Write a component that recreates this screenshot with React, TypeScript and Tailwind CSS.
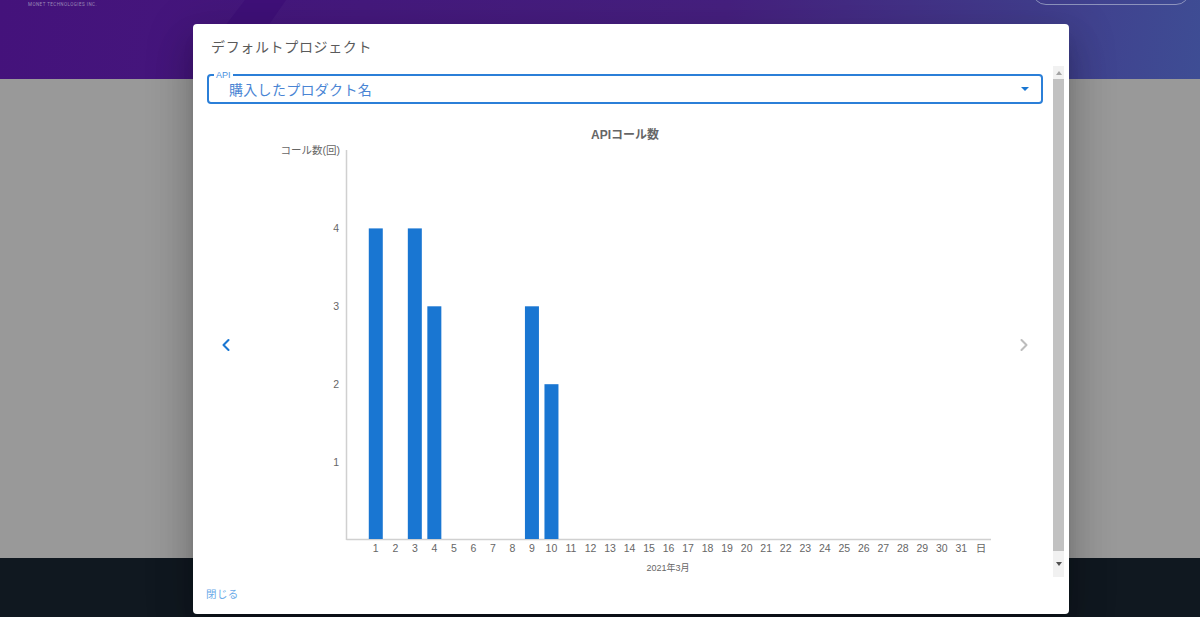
import { ChevronLeft, ChevronRight } from 'lucide-react';

const DAYS = Array.from({ length: 31 }, (_, i) => String(i + 1)).concat('日');
const CALLS: Record<number, number> = { 1: 4, 3: 4, 4: 3, 9: 3, 10: 2 };
const STEP_X = 19.52;
const STEP_Y = 77.9;
const AXIS_X = 346.5;
const BASE_Y = 540;

function UsageChart() {
  return (
    <svg viewBox="245 104 760 473" className="w-[760px] h-[473px] shrink-0">
      <text x="625" y="139" textAnchor="middle" fontSize="12" fontWeight="700" fill="#666">APIコール数</text>
      <text x="340" y="154" textAnchor="end" fontSize="10.5" fill="#666">コール数(回)</text>
      <line x1={AXIS_X} y1="150" x2={AXIS_X} y2={BASE_Y} stroke="#d0d0d0" strokeWidth="1.5" />
      <line x1={AXIS_X} y1={BASE_Y - 0.5} x2="991" y2={BASE_Y - 0.5} stroke="#d0d0d0" strokeWidth="1.5" />
      {[1, 2, 3, 4].map((n) => (
        <text key={n} x="339" y={BASE_Y - n * STEP_Y + 3.5} textAnchor="end" fontSize="10.5" fill="#666">{n}</text>
      ))}
      {DAYS.map((d, i) => {
        const cx = AXIS_X + STEP_X * (i + 1.5);
        const v = CALLS[i + 1];
        return (
          <g key={d}>
            {v && <rect x={cx - 7} y={BASE_Y - v * STEP_Y} width="14" height={v * STEP_Y - 1} fill="#1976d2" />}
            <text x={cx} y="552" textAnchor="middle" fontSize="10.5" fill="#666">{d}</text>
          </g>
        );
      })}
      <text x="668" y="571" textAnchor="middle" fontSize="9" fill="#666">2021年3月</text>
    </svg>
  );
}

function Scrollbar() {
  return (
    <div className="w-[11px] h-full shrink-0 bg-[#f1f1f1] flex flex-col items-center">
      <div className="h-[13px] flex items-center justify-center">
        <div className="w-0 h-0 border-x-[3.5px] border-x-transparent border-b-[4px] border-b-[#a3a3a3]" />
      </div>
      <div className="w-full flex-1 bg-[#c1c1c1]" />
      <div className="h-[26px] flex items-center justify-center">
        <div className="w-0 h-0 border-x-[3.5px] border-x-transparent border-t-[4px] border-t-[#505050]" />
      </div>
    </div>
  );
}

export default function App() {
  return (
    <div className="relative w-[1200px] h-[617px] overflow-hidden flex flex-col font-['Liberation_Sans','Noto_Sans_CJK_JP',sans-serif]">
      {/* page behind the modal */}
      <header className="relative h-[79px] shrink-0 bg-[linear-gradient(100deg,#44127b_0%,#46207f_60%,#3e4d94_100%)]">
        <svg viewBox="0 0 70 26" className="absolute left-[225px] top-0 w-[70px] h-[26px]">
          <polygon points="20,0 61,0 43,26 0,26" fill="#3f1079" />
        </svg>
        <div className="pl-7 pt-[2px] text-[4.5px] leading-[6px] tracking-[0.45px] text-[#9c8bb8] font-['Roboto',sans-serif]">MONET TECHNOLOGIES INC.</div>
        <div className="absolute right-[10px] top-[-31px] w-[158px] h-[36px] rounded-[14px] border border-[#8d93bd]" />
      </header>
      <main className="flex-1 bg-[#999999]" />
      <footer className="h-[59px] shrink-0 bg-[#101820]" />

      {/* modal */}
      <div className="absolute left-[193px] top-[24px] w-[876px] h-[590px] bg-white rounded-[4px] shadow-[0_11px_15px_-7px_rgba(0,0,0,0.2),0_24px_38px_3px_rgba(0,0,0,0.14),0_9px_46px_8px_rgba(0,0,0,0.12)] flex flex-col">
        <h2 className="h-[42px] shrink-0 pl-[18px] pt-[2px] flex items-center text-[14px] font-normal tracking-[0.65px] text-[#5a5a5a] font-['Noto_Sans_CJK_JP',sans-serif]">
          デフォルトプロジェクト
        </h2>
        <div className="h-[511px] shrink-0 flex pl-[14px] pr-[5px]">
          <div className="flex-1 min-w-0 pt-2 pr-[10px]">
            <div className="relative h-[30px] rounded-[4px] border-2 border-[#2b7fd8] flex items-center pl-5 pr-[12px]">
              <span className="absolute left-[5px] top-[-5px] bg-white px-[2px] text-[9px] leading-[9px] text-[#4a90e0]">API</span>
              <span className="flex-1 text-[14px] tracking-[0.3px] text-[#4a85d4] font-['Noto_Sans_CJK_JP',sans-serif]">購入したプロダクト名</span>
              <div className="w-0 h-0 border-x-[4px] border-x-transparent border-t-[4px] border-t-[#1976d2]" />
            </div>
            <div className="flex items-center">
              <div className="w-[38px] pt-2 flex justify-center text-[#1976d2]">
                <ChevronLeft size={20} strokeWidth={2.5} />
              </div>
              <UsageChart />
              <div className="w-[38px] pt-2 flex justify-center text-[#bdbdbd]">
                <ChevronRight size={20} strokeWidth={2.5} />
              </div>
            </div>
          </div>
          <Scrollbar />
        </div>
        <div className="flex-1 pl-[13px] flex items-center pb-[4px]">
          <button className="text-[10.5px] tracking-[0.4px] text-[#6aaae8] font-['Noto_Sans_CJK_JP',sans-serif]">閉じる</button>
        </div>
      </div>
    </div>
  );
}
